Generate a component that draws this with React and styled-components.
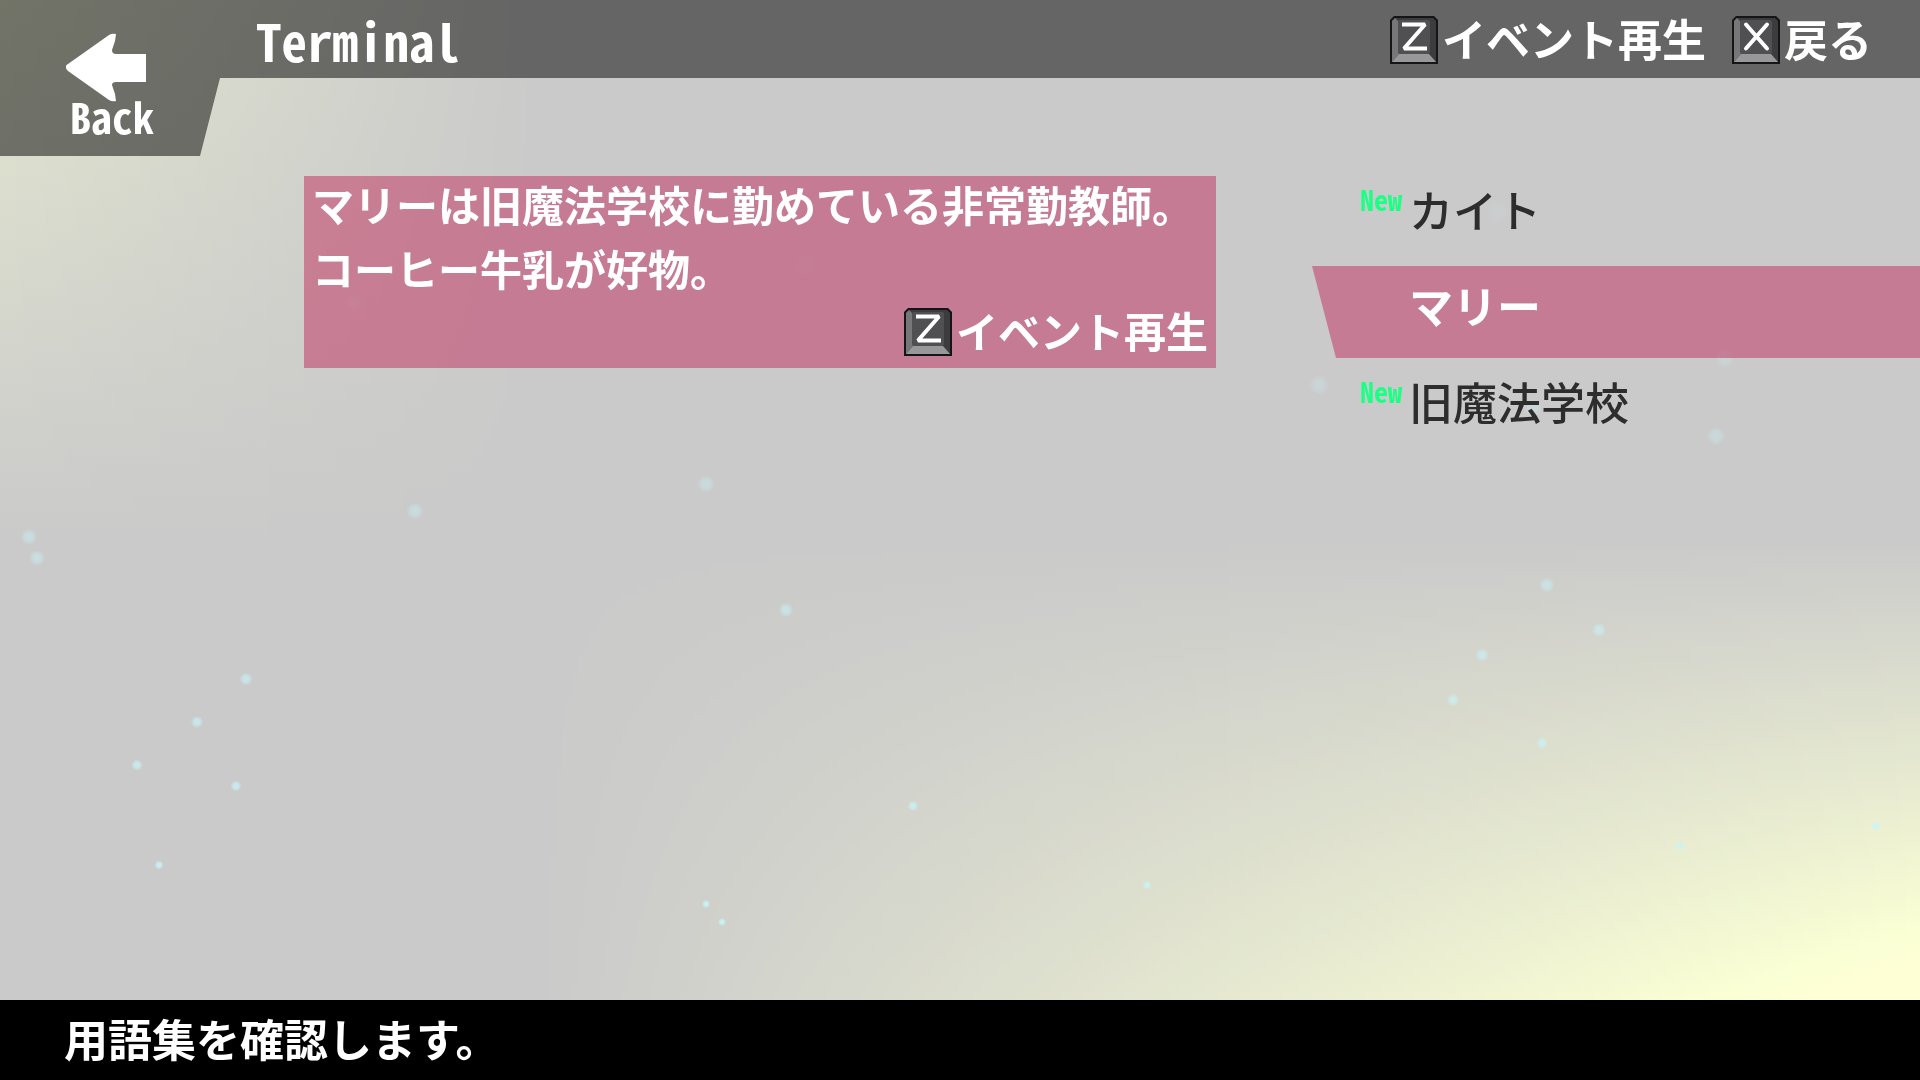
import React from 'react';
import styled, { createGlobalStyle } from 'styled-components';

const GlobalStyle = createGlobalStyle`
    body {
        margin: 0;
        font-family: 'Noto Sans CJK JP', sans-serif;
    }
`;

const MONO = "'Noto Sans Mono CJK JP', 'Noto Sans CJK JP', monospace";

const Screen = styled.div`
    position: relative;
    isolation: isolate;
    display: flex;
    flex-direction: column;
    min-height: 100vh;
    background: #cacaca;
    overflow: hidden;
`;

const Glow = styled.div`
    position: absolute;
    inset: 0;
    z-index: -1;
    mix-blend-mode: plus-lighter;
    pointer-events: none;
`;

const TopGlow = styled(Glow)`
    background: linear-gradient(to bottom, rgb(26, 30, 6), transparent 50%);
    mask-image: linear-gradient(to right, #000, transparent 28%);
`;

const BottomGlow = styled(Glow)`
    background: linear-gradient(to bottom, transparent 50%, rgb(57, 63, 12) 93%);
    mask-image: linear-gradient(to right, transparent 28%, #000);
`;

const Particles = styled.svg`
    position: absolute;
    inset: 0;
    z-index: -1;
    width: 100%;
    height: 100%;
    pointer-events: none;
`;

const Header = styled.header`
    display: flex;
    align-items: flex-start;
    height: 156px;
    color: #fff;
    background: rgba(0, 0, 0, 0.5);
    clip-path: polygon(
        0 0,
        100% 0,
        100% 78px,
        220px 78px,
        200px 156px,
        0 156px
    );
`;

const BackButton = styled.button`
    display: flex;
    flex-direction: column;
    align-items: flex-start;
    box-sizing: border-box;
    width: 256px;
    height: 156px;
    padding: 33px 0 0 66px;
    border: none;
    background: transparent;
    color: #fff;
    cursor: pointer;
`;

const BackLabel = styled.span`
    padding-left: 4px;
    font-family: ${MONO};
    font-size: 42px;
    font-weight: bold;
    line-height: 28px;
`;

const Title = styled.h1`
    flex: 1;
    margin: 0;
    font-family: ${MONO};
    font-size: 51px;
    font-weight: bold;
    line-height: 80px;
`;

const Hints = styled.div`
    display: flex;
    gap: 26px;
    height: 80px;
    padding-right: 48px;
`;

const HintButton = styled.button`
    display: flex;
    align-items: center;
    gap: 4px;
    padding: 0;
    border: none;
    background: transparent;
    color: #fff;
    font-family: inherit;
    font-size: ${(props) => props.$size}px;
    font-weight: bold;
    line-height: 56px;
    cursor: pointer;
`;

const HintLabel = styled.span`
    padding-bottom: 4px;
`;

const Main = styled.main`
    flex: 1;
    display: grid;
    grid-template-columns: 3fr 2fr;
    align-items: start;
    gap: 96px;
    padding: 14px 0 0 304px;
`;

const Panel = styled.section`
    display: flex;
    flex-direction: column;
    margin-top: 6px;
    padding: 0 8px;
    background: rgba(192, 44, 92, 0.5);
    color: #fff;
`;

const Description = styled.p`
    margin: -4px 0 0;
    font-size: 42px;
    font-weight: bold;
    line-height: 64px;
`;

const PanelAction = styled.div`
    display: flex;
    justify-content: flex-end;
    padding: 2px 0 6px;
`;

const List = styled.ul`
    display: flex;
    flex-direction: column;
    gap: 4px;
    margin: 0;
    padding: 0;
    list-style: none;
`;

const Entry = styled.button`
    display: flex;
    align-items: flex-start;
    box-sizing: border-box;
    width: 100%;
    height: 92px;
    padding: 8px 0 0 48px;
    border: none;
    background: ${(props) => (props.$selected ? 'rgba(192, 44, 92, 0.5)' : 'transparent')};
    clip-path: polygon(0 0, 100% 0, 100% 100%, 24px 100%);
    color: ${(props) => (props.$selected ? '#fff' : '#2d2d2d')};
    font-family: inherit;
    font-size: 44px;
    font-weight: ${(props) => (props.$selected ? 'bold' : '500')};
    line-height: 62px;
    text-align: left;
    cursor: pointer;
`;

const Badge = styled.span`
    width: 49px;
    color: #1bff84;
    font-family: ${MONO};
    font-size: 28px;
    font-weight: bold;
    line-height: 42px;
`;

const Footer = styled.footer`
    height: 80px;
    padding-left: 64px;
    background: #000;
    color: #fff;
    font-size: 44px;
    font-weight: bold;
    line-height: 76px;
`;

const KEY_SHAPES = {
    Z: 'M12 8.5H35L14 32.5H37',
    X: 'M14 8.5L35 32.5M35 8.5L14 32.5',
};

const KeyCap = ({ name }) => (
    <svg width="48" height="48" viewBox="0 0 48 48" role="img" aria-label={name}>
        <path d="M4 0H44L48 4V48H0V4Z" fill="#151517" />
        <path d="M5 2H43L46 5V46H2V5Z" fill="#3c3c3f" />
        <path d="M5 2L9 6V38L2 46V5Z" fill="#77777a" />
        <path d="M9 38H39L46 46H2Z" fill="#98989b" />
        <rect x="8" y="4" width="32" height="34" rx="2" fill="#505053" />
        <path
            d={KEY_SHAPES[name]}
            fill="none"
            stroke="#fff"
            strokeWidth="4"
            strokeLinecap={name === 'X' ? 'round' : 'butt'}
            strokeLinejoin="bevel"
        />
    </svg>
);

const BackArrow = () => (
    <svg width="80" height="69" viewBox="0 0 80 69" aria-hidden="true">
        <path
            d="M0 33Q0 32 2 31L43 2Q46 0 50 1L49 8L46 17Q46 21 50 21H80V49H50Q46 49 46 52L49 61L50 68Q46 69 43 67L2 38Q0 36 0 35Z"
            fill="#fff"
        />
    </svg>
);

const particles = [
    [1498, 212],
    [805, 265],
    [354, 303],
    [1725, 358],
    [1319, 385],
    [1533, 408],
    [1716, 436],
    [706, 484],
    [415, 511],
    [29, 537],
    [37, 558],
    [1547, 585],
    [786, 610],
    [1599, 630],
    [1482, 655],
    [246, 679],
    [1453, 700],
    [197, 722],
    [1542, 743],
    [137, 765],
    [236, 786],
    [913, 806],
    [1876, 826],
    [1680, 846],
    [159, 865],
    [1147, 885],
    [706, 904],
    [722, 922],
];

// sparks grow and fade as they rise
const sparkRadius = (y) => 4 + (922 - y) / 90;
const sparkOpacity = (y) => Math.max(0.1, 1 - (922 - y) / 750);

const entries = [
    { name: 'カイト', isNew: true },
    { name: 'マリー', selected: true },
    { name: '旧魔法学校', isNew: true },
];

const App = () => (
    <Screen>
        <GlobalStyle />
        <TopGlow />
        <BottomGlow />
        <Particles aria-hidden="true">
            <defs>
                <radialGradient id="spark">
                    <stop offset="0" stopColor="#c8f4fa" />
                    <stop offset="0.5" stopColor="#c8f4fa" stopOpacity="0.8" />
                    <stop offset="1" stopColor="#c8f4fa" stopOpacity="0" />
                </radialGradient>
            </defs>
            {particles.map(([x, y]) => (
                <circle
                    key={`${x}-${y}`}
                    cx={`${(x / 1920) * 100}%`}
                    cy={`${(y / 1080) * 100}%`}
                    r={sparkRadius(y)}
                    opacity={sparkOpacity(y)}
                    fill="url(#spark)"
                />
            ))}
        </Particles>
        <Header>
            <BackButton type="button">
                <BackArrow />
                <BackLabel>Back</BackLabel>
            </BackButton>
            <Title>Terminal</Title>
            <Hints>
                <HintButton type="button" $size={44}>
                    <KeyCap name="Z" />
                    <HintLabel>イベント再生</HintLabel>
                </HintButton>
                <HintButton type="button" $size={44}>
                    <KeyCap name="X" />
                    <HintLabel>戻る</HintLabel>
                </HintButton>
            </Hints>
        </Header>
        <Main>
            <Panel>
                <Description>
                    マリーは旧魔法学校に勤めている非常勤教師。
                    <br />
                    コーヒー牛乳が好物。
                </Description>
                <PanelAction>
                    <HintButton type="button" $size={42}>
                        <KeyCap name="Z" />
                        <HintLabel>イベント再生</HintLabel>
                    </HintButton>
                </PanelAction>
            </Panel>
            <List>
                {entries.map((entry) => (
                    <li key={entry.name}>
                        <Entry type="button" $selected={entry.selected}>
                            <Badge>{entry.isNew && 'New'}</Badge>
                            {entry.name}
                        </Entry>
                    </li>
                ))}
            </List>
        </Main>
        <Footer>用語集を確認します。</Footer>
    </Screen>
);

export default App;
